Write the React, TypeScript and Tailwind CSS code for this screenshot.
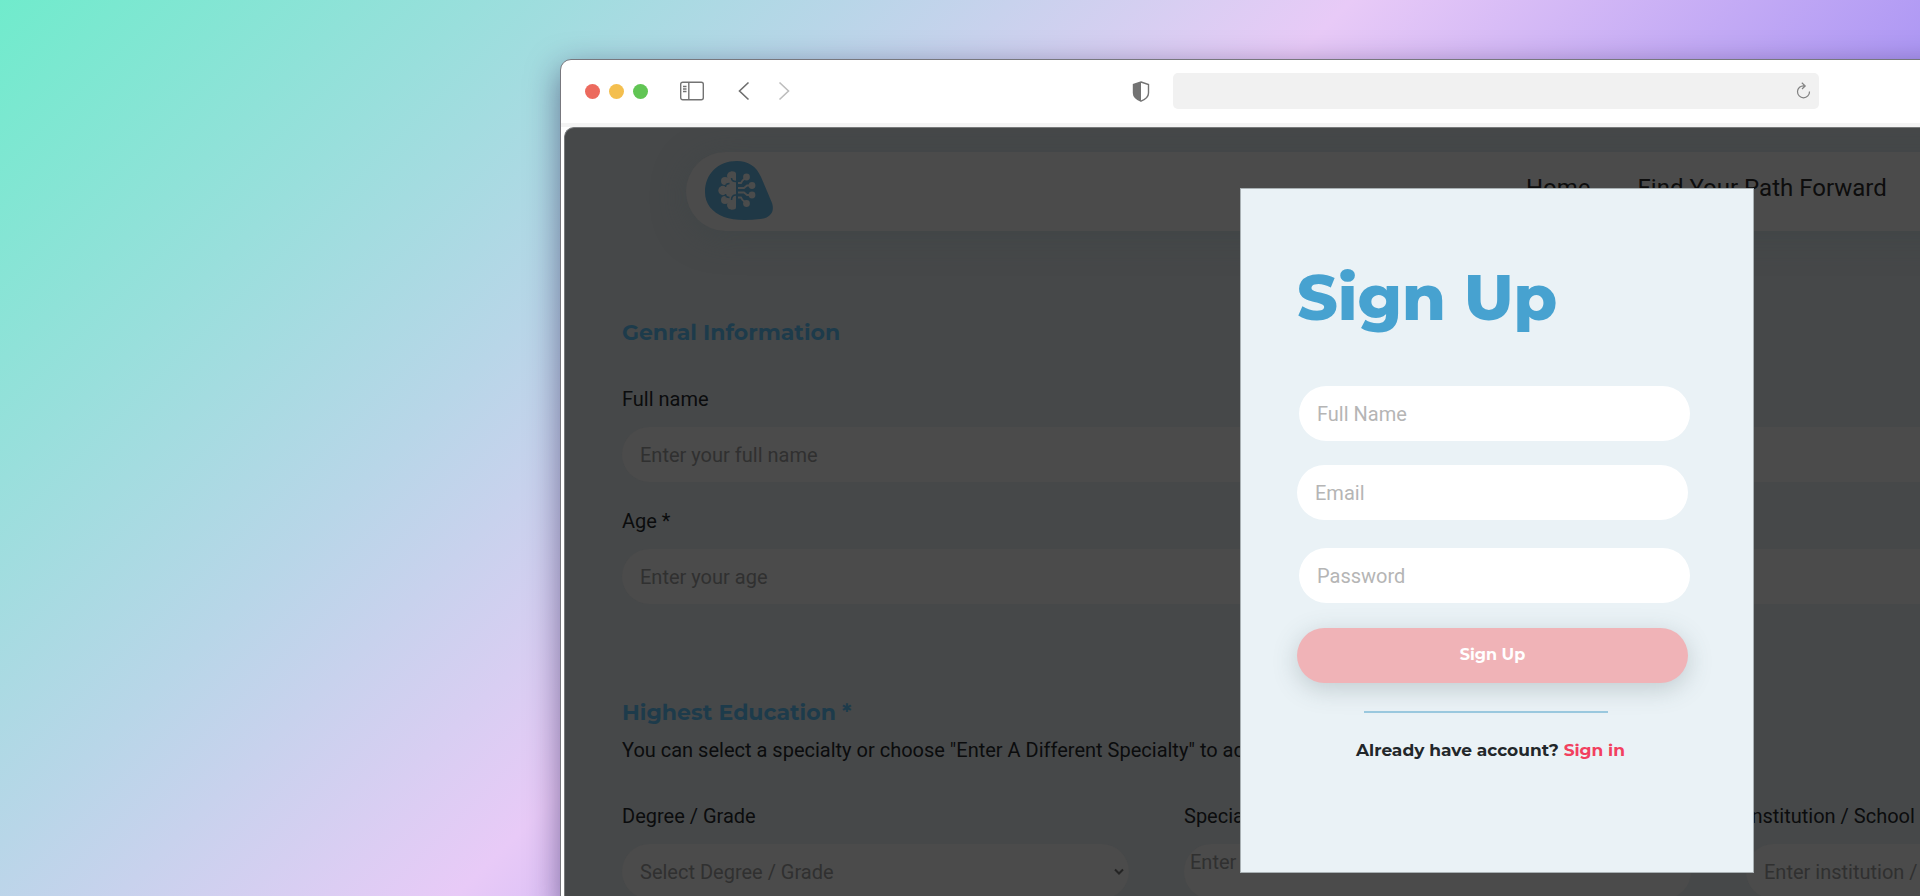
import React from "react";

function BrandLogo() {
  return (
    <svg viewBox="0 0 70 60" className="mb-1 h-[60px] w-[70px]" aria-label="Brain logo">
      <path
        d="M33 1C44 1 52 6 57 17L68 43C71 52 66 58 56 59C43 60.500 29 60.500 20 57C8 52 1 44 1 32C1 14 14 1 33 1Z"
        fill="#1f3846"
      />
      <g fill="#4b4c4c">
        <circle cx="27.500" cy="16" r="4.500" />
        <circle cx="21" cy="21" r="4" />
        <circle cx="19" cy="30.500" r="4.700" />
        <circle cx="21" cy="40" r="4" />
        <circle cx="27.500" cy="45" r="4.500" />
        <path d="M23 19H32V42H23L21 35V26Z" />
        <path d="M27 11.500H29.500Q32 11.500 32 14V47Q32 49.500 29.500 49.500H27Z" />
        <circle cx="42.500" cy="17" r="3.400" />
        <circle cx="48" cy="25.500" r="3.400" />
        <circle cx="48" cy="35" r="3.400" />
        <circle cx="42.500" cy="43.500" r="3.400" />
      </g>
      <g fill="none" stroke="#4b4c4c" strokeWidth="1.800">
        <path d="M34 23H37L38.500 20.500L42 17.500M34 28H40L43 25.500H48M34 32.500H40L43 35H48M34 37.500H37L38.500 40L42 43" />
      </g>
      <g fill="none" stroke="#1f3846" strokeWidth="1.500">
        <path d="M21.500 27C21.500 24 23.500 23.500 25.500 23.500M32 21.500C28.500 21.500 27.500 20 27.500 18M21.500 34C21.500 37 23.500 37.500 25.500 37.500M32 35C28.500 35 27.500 37 27.500 40" />
      </g>
    </svg>
  );
}

function Toolbar() {
  return (
    <div className="flex h-[63px] items-center pb-px pl-6">
      <div className="flex gap-[9px]">
        <span className="size-[15px] rounded-full bg-[#ec6a5e]" />
        <span className="size-[15px] rounded-full bg-[#f4bf4f]" />
        <span className="size-[15px] rounded-full bg-[#61c554]" />
      </div>
      <button type="button" aria-label="Toggle sidebar" className="ml-8">
        <svg viewBox="0 0 24 20" className="h-5 w-6" fill="none" stroke="#737373" strokeWidth="1.400">
          <rect x="0.700" y="1.200" width="22.600" height="17.600" rx="2" />
          <path d="M8.800 1.200V18.800M3 5.500H6.500M3 8H6.500M3 10.500H6.500" />
        </svg>
      </button>
      <button type="button" aria-label="Back" className="ml-[34px]">
        <svg viewBox="0 0 12 20" className="h-5 w-3" fill="none" stroke="#6e6e6e" strokeWidth="1.600">
          <path d="M10.500 1.500L1.500 10L10.500 18.500" />
        </svg>
      </button>
      <button type="button" aria-label="Forward" className="ml-7">
        <svg viewBox="0 0 12 20" className="h-5 w-3" fill="none" stroke="#bdbdbd" strokeWidth="1.600">
          <path d="M1.500 1.500L10.500 10L1.500 18.500" />
        </svg>
      </button>
      <button type="button" aria-label="Privacy report" className="ml-[342px]">
        <svg viewBox="0 0 18 21" className="h-[21px] w-[18px]">
          <path d="M9 1L16.500 3.500V12C16.500 16 13 18.500 9 20.200C5 18.500 1.500 16 1.500 12V3.500Z" fill="none" stroke="#737373" strokeWidth="1.400" />
          <path d="M9 1L1.500 3.500V12C1.500 16 5 18.500 9 20.200Z" fill="#737373" />
        </svg>
      </button>
      <div className="ml-[23px] flex h-9 w-[646px] items-center rounded-[5px] bg-[#f1f1f1] pr-2">
        <input aria-label="Address" className="h-full min-w-0 flex-1 bg-transparent px-3 outline-none" />
        <button type="button" aria-label="Reload">
          <svg viewBox="0 0 15 18" className="h-[18px] w-[15px]" fill="none" stroke="#808080" strokeWidth="1.200">
            <path d="M8 3.800A6 6 0 1 0 13.500 9.500M5.800 0.800L9.200 3.900L6 7" />
          </svg>
        </button>
      </div>
    </div>
  );
}

const sectionTitle =
  "font-['Montserrat','Open_Sans',sans-serif] text-[22px] leading-8 font-bold text-[#1d3b4b]";
const fieldLabel = "block h-7 text-[20px] leading-7 text-[#0b0c0d]";
const darkField =
  "h-[55px] w-full rounded-full bg-[#4b4b4b] px-[18px] text-[20px] text-[#303030] outline-none placeholder:text-[#303030] placeholder:opacity-100";
const lightField =
  "h-[55px] w-[391px] rounded-full bg-white px-[18px] text-[20px] text-[#444] outline-none placeholder:text-[#b5b5b5] placeholder:opacity-100";

function ProfilePage() {
  return (
    <div>
      <header className="pt-6 pl-[121px]">
        <div className="flex h-[79px] w-[1500px] items-center rounded-full bg-[#4b4b4b] pl-[18px] shadow-[0_6px_32px_rgba(60,68,70,0.5)]">
          <BrandLogo />
          <nav className="ml-[752px] flex gap-[47px] pb-2 text-[24px] leading-8 text-[#0d0d0d]">
            <a href="#home">Home</a>
            <a href="#path" className="whitespace-nowrap">Find Your Path Forward</a>
          </nav>
        </div>
      </header>
      <main className="w-[1688px] pl-[57px]">
        <h2 className={`mt-[86px] ${sectionTitle}`}>Genral Information</h2>
        <label htmlFor="name" className={`${fieldLabel} mt-9`}>Full name</label>
        <input id="name" placeholder="Enter your full name" className={`${darkField} mt-[14px]`} />
        <label htmlFor="age" className={`${fieldLabel} mt-[25px]`}>Age *</label>
        <input id="age" placeholder="Enter your age" className={`${darkField} mt-[14px]`} />
        <h2 className={`mt-[93px] ${sectionTitle}`}>Highest Education *</h2>
        <p className="mt-[7px] text-[20px] leading-7 text-[#0b0c0d]">
          You can select a specialty or choose "Enter A Different Specialty" to add your own
        </p>
        <div className="mt-[38px] grid grid-cols-[507px_507px_507px] gap-[55px]">
          <div>
            <label htmlFor="degree" className={fieldLabel}>Degree / Grade</label>
            <div className="relative mt-[14px]">
              <select id="degree" className={`${darkField} appearance-none`}>
                <option>Select Degree / Grade</option>
              </select>
              <svg viewBox="0 0 10 8" className="pointer-events-none absolute top-6 right-[5px] h-2 w-[10px]" fill="none" stroke="#242424" strokeWidth="2">
                <path d="M1 1.500L5 5.500L9 1.500" />
              </svg>
            </div>
          </div>
          <div>
            <label htmlFor="specialty" className={fieldLabel}>Specialty</label>
            <textarea
              id="specialty"
              placeholder="Enter your specialty"
              className="mt-[14px] h-[55px] w-full resize-none rounded-[27px] bg-[#4b4b4b] px-[6px] py-[4px] text-[20px] leading-7 outline-none placeholder:text-[#303030] placeholder:opacity-100"
            />
          </div>
          <div>
            <label htmlFor="school" className={fieldLabel}>Institution / School</label>
            <input id="school" placeholder="Enter institution / school" className={`${darkField} mt-[14px]`} />
          </div>
        </div>
      </main>
    </div>
  );
}

function SignUpDialog() {
  return (
    <section role="dialog" aria-label="Sign Up" className="absolute top-[60px] left-[675px] h-[685px] w-[514px] border border-[#a9b1b4] bg-[#eaf2f6] pt-[71px] pl-[56px]">
      <h1 className="font-['Montserrat','Open_Sans',sans-serif] text-[63px] leading-[76px] font-extrabold text-[#47a2d0]">Sign Up</h1>
      <form className="mt-[50px] flex w-[393px] flex-col">
        <input aria-label="Full Name" placeholder="Full Name" className={`${lightField} self-end`} />
        <input aria-label="Email" type="email" placeholder="Email" className={`${lightField} mt-6`} />
        <input aria-label="Password" type="password" placeholder="Password" className={`${lightField} mt-7 self-end`} />
        <button type="button" className="mt-[25px] h-[55px] w-[391px] rounded-full bg-[#f0b3b7] pb-[2px] font-['Montserrat','Open_Sans',sans-serif] text-[16px] font-bold text-white shadow-[0_6px_24px_rgba(70,90,95,0.25)]">
          Sign Up
        </button>
      </form>
      <hr className="mt-7 ml-[67px] w-[244px] border-t-2 border-[#9bc9df]" />
      <p className="mt-[25px] w-[387px] text-center font-['Montserrat','Open_Sans',sans-serif] text-[17px] leading-6 font-bold text-[#22272a]">
        Already have account? <a href="#signin" className="text-[#f2405f]">Sign in</a>
      </p>
    </section>
  );
}

export default function App() {
  return (
    <div className="h-screen overflow-hidden bg-[linear-gradient(135deg,#70ebcc_0%,#b8d6e8_30%,#e8caf7_48%,#ae98f4_70%,#8f7bf0_100%)] pt-[59px] pl-[560px] font-[Roboto,sans-serif]">
      <div className="w-[1700px] rounded-tl-[11px] border border-[#77777d] bg-white shadow-[0_10px_32px_rgba(30,20,70,0.5)]">
        <Toolbar />
        <div className="border-t-4 border-[#f4f4f4] pl-[3px]">
          <div className="relative h-[780px] overflow-hidden rounded-tl-[10px] border-t border-l border-[#77797a] bg-[#464849]">
            <ProfilePage />
            <SignUpDialog />
          </div>
        </div>
      </div>
    </div>
  );
}
